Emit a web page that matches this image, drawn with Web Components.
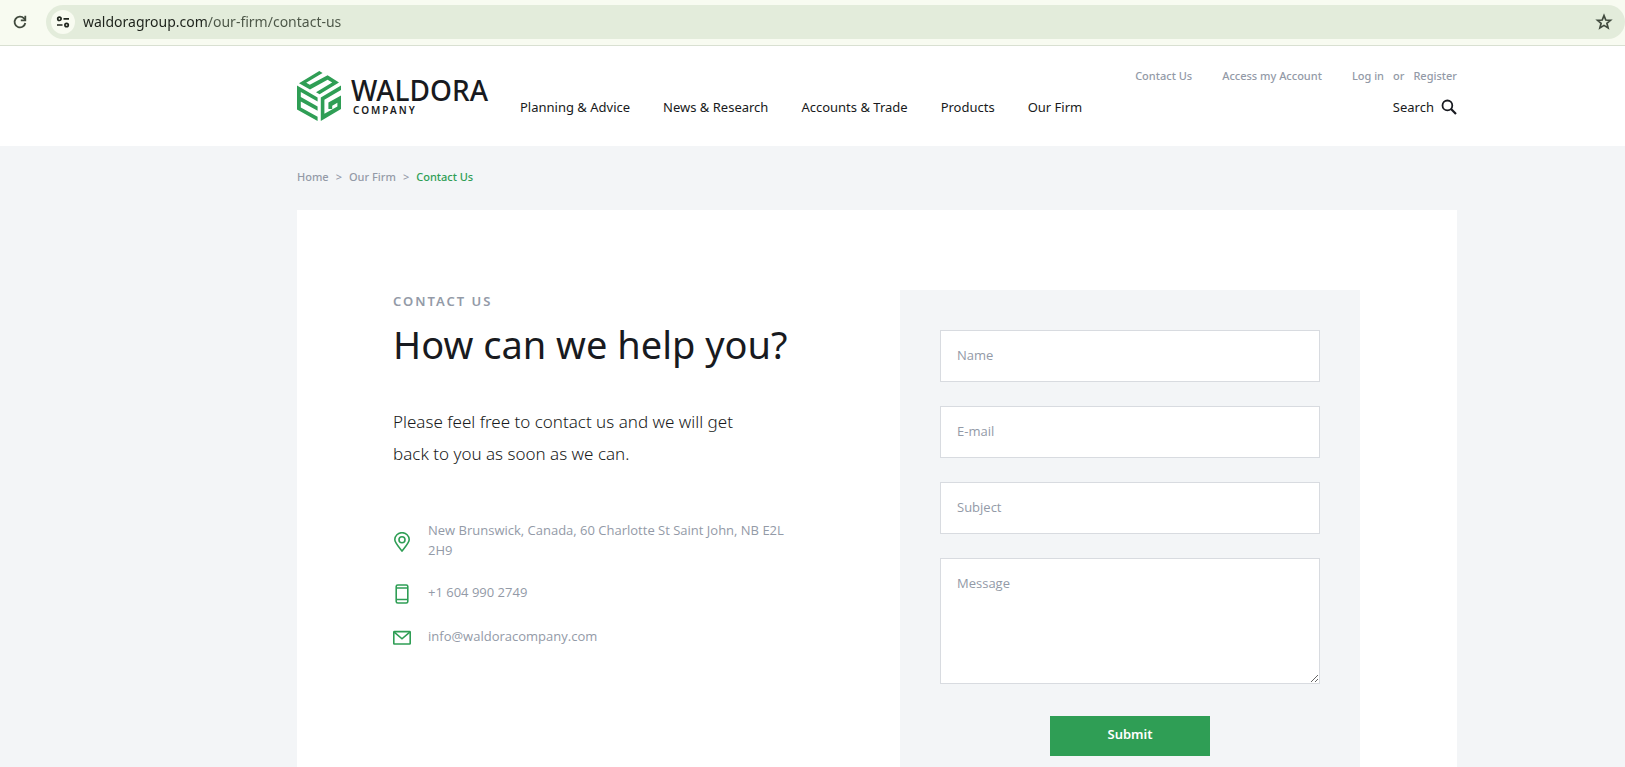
<!DOCTYPE html>
<html lang="en">
<head>
<meta charset="utf-8">
<title>Contact Us - Waldora Company</title>
<style>
  :root {
    --ink: #181a20;
    --muted: #939aa7;
    --green: #2f9e55;
    --panel: #f3f5f7;
    --line: #d8dbe0;
    --gutter-left: 297px;
    --gutter-right: 168px;
  }
  body {
    margin: 0;
    min-height: 100vh;
    background: var(--panel);
    color: var(--ink);
    font-family: "Noto Sans", "Open Sans", sans-serif;
  }
</style>
</head>
<body>
<browser-bar address="waldoragroup.com/our-firm/contact-us"></browser-bar>
<site-header></site-header>
<main>
  <bread-crumbs></bread-crumbs>
  <contact-card>
    <contact-intro slot="intro">
      <span slot="eyebrow">Contact Us</span>
      <span slot="title">How can we help you?</span>
      <span slot="lead">Please feel free to contact us and we will get back to you as soon as we can.</span>
      <contact-item icon="pin">New Brunswick, Canada, 60 Charlotte St Saint John, NB E2L 2H9</contact-item>
      <contact-item icon="phone">+1 604 990 2749</contact-item>
      <contact-item icon="mail">info@waldoracompany.com</contact-item>
    </contact-intro>
    <contact-form slot="form"></contact-form>
  </contact-card>
</main>

<script>
const define = (name, html, setup) => {
  const template = document.createElement('template');
  template.innerHTML = html;
  customElements.define(name, class extends HTMLElement {
    constructor() {
      super();
      this.attachShadow({ mode: 'open' }).append(template.content.cloneNode(true));
    }
    connectedCallback() {
      if (setup) setup(this, this.shadowRoot);
    }
  });
};

define('browser-bar', `
  <style>
    :host { display: flex; align-items: center; gap: 14px; box-sizing: border-box; height: 46px;
      padding: 0 0 2px 8px; background: #f8fbf1; border-bottom: 1px solid #d9e0d2; }
    button { display: grid; place-items: center; flex: none; width: 24px; height: 24px; padding: 0;
      border: 0; border-radius: 12px; background: none; color: #414a3e; }
    svg { display: block; }
    .pill { flex: 1; display: flex; align-items: center; gap: 8px; height: 34px; padding: 0 9px 0 5px;
      border-radius: 17px; background: #e3ecdb; }
    .pill .site { background: #f8fbf1; color: #1f251d; }
    input { flex: 1; min-width: 0; height: 24px; padding: 0; border: 0; font: 14px/24px "Noto Sans", sans-serif;
      color: transparent; background: linear-gradient(90deg, #1d221b 124px, #4b5546 124px) text; }
  </style>
  <button aria-label="Reload"><svg width="16" height="16" viewBox="0 0 16 16" fill="none" stroke="currentColor" stroke-width="1.8"><path d="M13.3 9A5.4 5.4 0 1 1 12 4.4L13.4 6"/><path d="M13.3 1.8V6.4H8.8"/></svg></button>
  <div class="pill">
    <button class="site" aria-label="Site information"><svg width="14" height="12" viewBox="0 0 14 12" fill="none" stroke="currentColor" stroke-width="1.7"><circle cx="3.4" cy="2.8" r="1.7"/><path d="M7.5 2.8H13M1 9H6.5"/><circle cx="10.6" cy="9" r="1.7"/></svg></button>
    <input type="text" aria-label="Address">
    <button aria-label="Bookmark"><svg width="18" height="18" viewBox="0 0 18 18" fill="none" stroke="currentColor" stroke-width="1.7"><path d="M9 2.6L10.8 7L15.5 7.3L11.9 10.3L13.1 15L9 12.4L4.9 15L6.1 10.3L2.5 7.3L7.2 7Z"/></svg></button>
  </div>
`, (host, root) => { root.querySelector('input').value = host.getAttribute('address'); });

define('site-logo', `
  <style>
    :host { display: block; }
    a { display: flex; align-items: center; gap: 10px; color: var(--ink); text-decoration: none; }
    svg { display: block; flex: none; }
    .words { display: flex; flex-direction: column; }
    .name { font-size: 28px; line-height: 28px; font-weight: 500; }
    .sub { padding-left: 2px; font-size: 10px; line-height: 12px; font-weight: 600; letter-spacing: 2px; }
  </style>
  <a href="#">
    <svg width="44" height="50" viewBox="0 0 44 50" fill="#2f9e55">
      <path d="M22.3 0L25.6 1.9L9.2 11.7L12.8 13.8L30.6 4.2L42 11.4L22.6 23.2L19 21.2L35.2 11.5L30.6 8.7L13 18.6L2 12.2Z"/>
      <path d="M0 14.6L20.6 26.4V30.6L3.8 21V26L20.6 35.6V39.8L3.8 30.4V36.4L20.6 45.8V50L0 38.6Z"/>
      <path d="M44 14.6V19L27.4 28.8V42.8L40.4 35.6V31.8L35.2 34.8V38H31.4V31.6L44 24.6V38L23.8 50V26.4Z"/>
    </svg>
    <span class="words"><span class="name">WALDORA</span><span class="sub">COMPANY</span></span>
  </a>
`);

define('site-header', `
  <style>
    :host { display: flex; align-items: center; gap: 32px; background: #fff;
      padding: 20px var(--gutter-right) 20px var(--gutter-left); }
    .rows { flex: 1; height: 60px; }
    .rows, .row, .links, .account { display: flex; }
    .rows { flex-direction: column; gap: 11px; }
    .row { align-items: center; justify-content: space-between; height: 20px; line-height: 20px; white-space: nowrap; }
    .util { justify-content: flex-end; gap: 30px; font-size: 11px; font-weight: 500; color: var(--muted); }
    .account { gap: 9px; }
    .links { gap: 33px; }
    .main { font-size: 13px; }
    a, button { color: inherit; text-decoration: none; }
    button { display: flex; align-items: center; gap: 7px; padding: 0; border: 0; background: none; font: inherit; }
    svg { display: block; }
  </style>
  <site-logo></site-logo>
  <div class="rows">
    <div class="row util">
      <a href="#">Contact Us</a><a href="#">Access my Account</a>
      <span class="account"><a href="#">Log in</a><span>or</span><a href="#">Register</a></span>
    </div>
    <div class="row main">
      <nav class="links"><a href="#">Planning &amp; Advice</a><a href="#">News &amp; Research</a><a href="#">Accounts &amp; Trade</a><a href="#">Products</a><a href="#">Our Firm</a></nav>
      <button>Search <svg width="16" height="16" viewBox="0 0 16 16" fill="none" stroke="currentColor" stroke-width="1.8"><circle cx="6.4" cy="6.4" r="4.9"/><path d="M9.8 9.8L15 15" stroke-width="2.2"/></svg></button>
    </div>
  </div>
`);

define('bread-crumbs', `
  <style>
    :host { display: block; padding: 21px var(--gutter-right) 23px var(--gutter-left); }
    nav { display: flex; gap: 7px; font-size: 11px; line-height: 20px; font-weight: 500; color: var(--muted); }
    a { color: inherit; text-decoration: none; }
    .here { color: var(--green); }
  </style>
  <nav aria-label="Breadcrumb"><a href="#">Home</a><span>&gt;</span><a href="#">Our Firm</a><span>&gt;</span><a class="here" href="#" aria-current="page">Contact Us</a></nav>
`);

define('contact-card', `
  <style>
    :host { display: grid; grid-template-columns: minmax(0, 41fr) minmax(0, 46fr); gap: 97px; align-items: start;
      margin: 0 var(--gutter-right) 0 var(--gutter-left); padding: 80px 97px 80px 96px; background: #fff; }
  </style>
  <slot name="intro"></slot><slot name="form"></slot>
`);

define('contact-intro', `
  <style>
    :host { display: block; }
    .eyebrow { margin: 0; font-size: 13px; line-height: 22px; font-weight: 600; letter-spacing: 2px;
      text-transform: uppercase; color: var(--muted); }
    h1 { margin: 2px 0 0; font-size: 38px; line-height: 60px; font-weight: 400; white-space: nowrap; }
    .lead { margin: 32px 0 50px; max-width: 380px; font-size: 17px; line-height: 32px; font-weight: 300; }
    .items { display: flex; flex-direction: column; gap: 20px; }
  </style>
  <p class="eyebrow"><slot name="eyebrow"></slot></p>
  <h1><slot name="title"></slot></h1>
  <p class="lead"><slot name="lead"></slot></p>
  <div class="items"><slot></slot></div>
`);

const ICONS = {
  pin: '<path d="M9 19C5 14 1.8 10.8 1.8 7.6A7.2 6.9 0 0 1 16.2 7.6C16.2 10.8 13 14 9 19Z"/><circle cx="9" cy="7.8" r="3"/>',
  phone: '<rect x="3.2" y="1" width="11.6" height="18" rx="1.6"/><path d="M3.2 4H14.8M3.2 15.5H14.8"/>',
  mail: '<rect x="0.8" y="3.6" width="16.4" height="12.4" rx="0.6"/><path d="M1.2 4.2L9 10.8L16.8 4.2"/>'
};

define('contact-item', `
  <style>
    :host { display: flex; align-items: center; gap: 17px; color: var(--muted);
      font: 500 13px/20px "Open Sans", "Noto Sans", sans-serif; }
    svg { display: block; flex: none; margin-top: 4px; }
  </style>
  <svg width="18" height="20" viewBox="0 0 18 20" fill="none" stroke="#2f9e55" stroke-width="1.6"></svg>
  <span><slot></slot></span>
`, (host, root) => { root.querySelector('svg').innerHTML = ICONS[host.getAttribute('icon')]; });

define('contact-form', `
  <style>
    :host { display: block; padding: 40px; background: var(--panel); }
    form { display: flex; flex-direction: column; gap: 24px; }
    input, textarea { display: block; box-sizing: border-box; width: 100%; margin: 0; padding: 14px 16px 16px;
      border: 1px solid var(--line); border-radius: 0; background: #fff; color: var(--ink);
      font: 13px/20px "Open Sans", "Noto Sans", sans-serif; }
    input { height: 52px; }
    textarea { height: 126px; resize: both; }
    ::placeholder { color: var(--muted); opacity: 1; }
    button { align-self: center; width: 160px; height: 40px; margin-top: 8px; padding: 0 0 4px; border: 0;
      background: var(--green); color: #fff; font: 600 13px/20px "Noto Sans", sans-serif; }
  </style>
  <form>
    <input type="text" placeholder="Name" aria-label="Name">
    <input type="email" placeholder="E-mail" aria-label="E-mail">
    <input type="text" placeholder="Subject" aria-label="Subject">
    <textarea placeholder="Message" aria-label="Message"></textarea>
    <button type="submit">Submit</button>
  </form>
`);
</script>
</body>
</html>
